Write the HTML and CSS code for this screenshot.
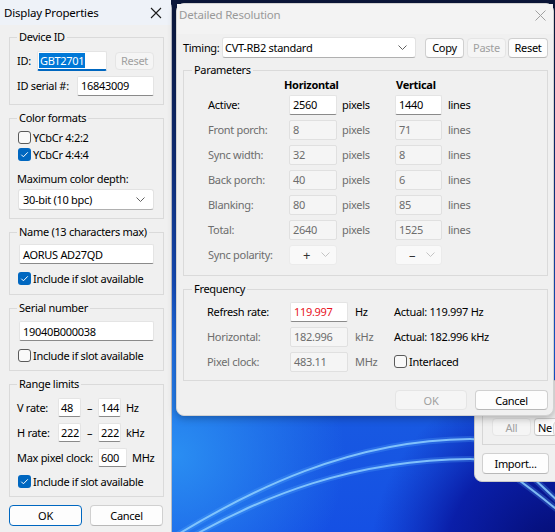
FILE: index.html
```html
<!DOCTYPE html>
<html>
<head>
<meta charset="utf-8">
<title>Display Properties</title>
<link rel="stylesheet" href="styles.css">
</head>
<body>
<svg class="wallpaper" width="555" height="532" viewBox="0 0 555 532">
  <defs>
    <linearGradient id="sky" x1="0" y1="0" x2="0" y2="1">
      <stop offset="0" stop-color="#0b173a"/>
      <stop offset="0.3" stop-color="#0f2e7c"/>
      <stop offset="0.65" stop-color="#1a5fe0"/>
      <stop offset="1" stop-color="#1550e4"/>
    </linearGradient>
    <radialGradient id="glow" cx="175" cy="455" r="170" gradientUnits="userSpaceOnUse">
      <stop offset="0" stop-color="#2a8ef2"/>
      <stop offset="1" stop-color="#2a8ef2" stop-opacity="0"/>
    </radialGradient>
    <radialGradient id="deep" cx="560" cy="560" r="190" gradientUnits="userSpaceOnUse">
      <stop offset="0" stop-color="#040a6a"/>
      <stop offset="0.6" stop-color="#07129a" stop-opacity="0.8"/>
      <stop offset="1" stop-color="#0a1fb0" stop-opacity="0"/>
    </radialGradient>
  </defs>
  <rect width="555" height="532" fill="url(#sky)"/>
  <rect width="555" height="532" fill="url(#glow)"/>
  <rect width="555" height="532" fill="url(#deep)"/>
  <g fill="none" stroke-linecap="round">
    <path d="M172 538 C250 490 350 440 470 439 C495 439 522 468 560 503" stroke="#5fb4ff" stroke-width="6" opacity="0.25"/>
    <path d="M172 538 C250 490 350 440 470 439 C495 439 522 468 560 503" stroke="#8fd0ff" stroke-width="2" opacity="0.85"/>
    <path d="M186 540 C262 496 352 460 470 459 C496 459 526 485 560 512" stroke="#5fb4ff" stroke-width="6" opacity="0.25"/>
    <path d="M186 540 C262 496 352 460 470 459 C496 459 526 485 560 512" stroke="#8fd0ff" stroke-width="2" opacity="0.85"/>
  </g>
</svg>

<!-- window partly hidden behind Detailed Resolution -->
<div class="win win-back">
  <div class="frag">
    <button class="btn off w39">All</button>
    <button class="btn w39 clip">Ne</button>
    <span class="edge"></span>
  </div>
  <button class="btn import">Import...</button>
</div>

<div class="win win-props">
  <div class="titlebar">
    <span class="title">Display Properties</span>
    <svg class="close" width="12" height="12" viewBox="0 0 12 12"><path d="M1 1 L11 11 M11 1 L1 11" stroke="#1a1a1a" stroke-width="1.1"/></svg>
  </div>

  <fieldset class="group g-device">
    <legend>Device ID</legend>
    <div class="row r25">
      <span class="lbl w20">ID:</span>
      <span class="edit focus w70"><span class="sel">GBT2701</span></span>
      <button class="btn off reset">Reset</button>
    </div>
    <div class="row r25">
      <span class="lbl w60">ID serial #:</span>
      <span class="edit grow">16843009</span>
    </div>
  </fieldset>

  <fieldset class="group g-color">
    <legend>Color formats</legend>
    <div class="row r17 chkrow"><span class="chk"></span>YCbCr 4:2:2</div>
    <div class="row r17 chkrow"><span class="chk on"><svg width="13" height="13" viewBox="0 0 13 13"><path d="M3.3 6.7 L5.4 8.8 L9.8 4.3" fill="none" stroke="#fff" stroke-width="1"/></svg></span>YCbCr 4:4:4</div>
    <div class="row r17 depth-lbl">Maximum color depth:</div>
    <div class="combo depth">
      <span>30-bit (10 bpc)</span>
      <svg width="9" height="5" viewBox="0 0 9 5"><path d="M0.5 0.5 L4.5 4.5 L8.5 0.5" fill="none" stroke="#606060"/></svg>
    </div>
  </fieldset>

  <fieldset class="group g-name">
    <legend>Name (13 characters max)</legend>
    <span class="edit full">AORUS AD27QD</span>
    <div class="row r17 chkrow mt6"><span class="chk on"><svg width="13" height="13" viewBox="0 0 13 13"><path d="M3.3 6.7 L5.4 8.8 L9.8 4.3" fill="none" stroke="#fff" stroke-width="1"/></svg></span>Include if slot available</div>
  </fieldset>

  <fieldset class="group g-serial">
    <legend>Serial number</legend>
    <span class="edit full">19040B000038</span>
    <div class="row r17 chkrow mt6"><span class="chk"></span>Include if slot available</div>
  </fieldset>

  <fieldset class="group g-range">
    <legend>Range limits</legend>
    <div class="row r25">
      <span class="lbl w41">V rate:</span>
      <span class="edit small w23">48</span>
      <span class="dash">–</span>
      <span class="edit small w23">144</span>
      <span class="unit">Hz</span>
    </div>
    <div class="row r25">
      <span class="lbl w41">H rate:</span>
      <span class="edit small w23">222</span>
      <span class="dash">–</span>
      <span class="edit small w23">222</span>
      <span class="unit">kHz</span>
    </div>
    <div class="row r25">
      <span class="lbl w81">Max pixel clock:</span>
      <span class="edit small w29">600</span>
      <span class="unit">MHz</span>
    </div>
    <div class="row r17 chkrow mt3"><span class="chk on"><svg width="13" height="13" viewBox="0 0 13 13"><path d="M3.3 6.7 L5.4 8.8 L9.8 4.3" fill="none" stroke="#fff" stroke-width="1"/></svg></span>Include if slot available</div>
  </fieldset>

  <div class="buttons-left">
    <button class="btn default w73">OK</button>
    <button class="btn w73">Cancel</button>
  </div>
</div>

<div class="win win-res">
  <div class="titlebar inactive">
    <span class="title">Detailed Resolution</span>
    <svg class="close" width="11" height="11" viewBox="0 0 11 11"><path d="M0.5 0.5 L10.5 10.5 M10.5 0.5 L0.5 10.5" stroke="#a0a0a0" stroke-width="1"/></svg>
  </div>

  <div class="timing">
    <span class="lbl w39">Timing:</span>
    <div class="combo timing-combo">
      <span>CVT-RB2 standard</span>
      <svg width="9" height="5" viewBox="0 0 9 5"><path d="M0.5 0.5 L4.5 4.5 L8.5 0.5" fill="none" stroke="#606060"/></svg>
    </div>
    <button class="btn w39 copy">Copy</button>
    <button class="btn off w39 paste">Paste</button>
    <button class="btn w40 treset">Reset</button>
  </div>

  <fieldset class="group g-params">
    <legend>Parameters</legend>
    <div class="pgrid">
      <span></span>
      <span class="head h-horz">Horizontal</span>
      <span class="head h-vert">Vertical</span>

      <span class="plbl">Active:</span>
      <span class="edit">2560</span><span class="punit">pixels</span>
      <span class="edit">1440</span><span class="punit lines">lines</span>

      <span class="plbl dim">Front porch:</span>
      <span class="edit dis">8</span><span class="punit dim">pixels</span>
      <span class="edit dis">71</span><span class="punit lines dim">lines</span>

      <span class="plbl dim">Sync width:</span>
      <span class="edit dis">32</span><span class="punit dim">pixels</span>
      <span class="edit dis">8</span><span class="punit lines dim">lines</span>

      <span class="plbl dim">Back porch:</span>
      <span class="edit dis">40</span><span class="punit dim">pixels</span>
      <span class="edit dis">6</span><span class="punit lines dim">lines</span>

      <span class="plbl dim">Blanking:</span>
      <span class="edit dis">80</span><span class="punit dim">pixels</span>
      <span class="edit dis">85</span><span class="punit lines dim">lines</span>

      <span class="plbl dim">Total:</span>
      <span class="edit dis">2640</span><span class="punit dim">pixels</span>
      <span class="edit dis">1525</span><span class="punit lines dim">lines</span>

      <span class="plbl dim">Sync polarity:</span>
      <span class="pol"><span>+</span><svg width="9" height="5" viewBox="0 0 9 5"><path d="M0.5 0.5 L4.5 4.5 L8.5 0.5" fill="none" stroke="#c4c4c4"/></svg></span><span></span>
      <span class="pol"><span>–</span><svg width="9" height="5" viewBox="0 0 9 5"><path d="M0.5 0.5 L4.5 4.5 L8.5 0.5" fill="none" stroke="#c4c4c4"/></svg></span><span></span>
    </div>
  </fieldset>

  <fieldset class="group g-freq">
    <legend>Frequency</legend>
    <div class="fgrid">
      <span class="plbl">Refresh rate:</span>
      <span class="edit red">119.997</span><span class="funit">Hz</span>
      <span class="actual">Actual: 119.997 Hz</span>

      <span class="plbl dim">Horizontal:</span>
      <span class="edit dis">182.996</span><span class="funit dim">kHz</span>
      <span class="actual">Actual: 182.996 kHz</span>

      <span class="plbl dim">Pixel clock:</span>
      <span class="edit dis">483.11</span><span class="funit dim">MHz</span>
      <span class="actual chkrow"><span class="chk"></span>Interlaced</span>
    </div>
  </fieldset>

  <div class="buttons-right">
    <button class="btn off w72">OK</button>
    <button class="btn w73">Cancel</button>
  </div>
</div>
</body>
</html>
```

FILE: styles.css
```css
* {
    box-sizing: border-box;
}
html, body {
    margin: 0;
    padding: 0;
}
body {
    position: relative;
    width: 555px;
    height: 532px;
    overflow: hidden;
    font-family: "Noto Sans", "Segoe UI", sans-serif;
    font-size: 11px;
    letter-spacing: -0.3px;
    color: #000;
    background: #12308a;
}
.wallpaper {
    position: absolute;
    left: 0;
    top: 0;
}

/* windows on the desktop */
.win {
    position: absolute;
    background: #f0f0f0;
}
.win-props {
    left: 0;
    top: 0;
    width: 171px;
    height: 540px;
    border-radius: 0 8px 0 0;
    box-shadow: 1px 0 0 #b8bcc6;
}
.win-res {
    left: 176px;
    top: 3px;
    width: 378px;
    height: 413px;
    border: 1px solid #d2d2d2;
    border-radius: 8px;
    box-shadow: 0 2px 8px rgba(0, 0, 0, 0.3);
}
.win-back {
    left: 474px;
    top: 380px;
    width: 90px;
    height: 102px;
    border-radius: 0 0 0 8px;
    border: 1px solid #c9c9c9;
}

.titlebar {
    display: flex;
    justify-content: space-between;
    height: 25px;
    padding: 5px 9px 0 4px;
    background: #eef2f8;
    font-size: 11.5px;
    letter-spacing: -0.2px;
    line-height: 16px;
}
.titlebar .close {
    margin-top: 2px;
}
.titlebar.inactive {
    height: 30px;
    padding: 3px 7px 0 2px;
    background: #f3f3f3;
    color: #999;
}
.titlebar.inactive .close {
    margin-top: 3px;
}

/* group boxes */
.group {
    border: 1px solid #dadada;
    margin: 6px 7px 0 9px;
    padding: 0 9px 6px 7px;
    min-width: 0;
}
.group legend {
    padding: 0 2px;
    height: 14px;
    line-height: 14px;
    white-space: nowrap;
}
.g-device {
    margin-top: 5px;
    padding-top: 4px;
}
.g-color {
    padding-top: 4px;
    padding-bottom: 8px;
}
.g-name {
    padding-top: 5px;
    padding-bottom: 7px;
}
.g-serial {
    padding-top: 6px;
    padding-bottom: 6px;
}
.g-range {
    padding-top: 4px;
    padding-bottom: 6px;
}

.row {
    display: flex;
    align-items: center;
}
.r25 {
    height: 25px;
}
.r17 {
    height: 17px;
}
.mt6 {
    margin-top: 6px;
}
.mt3 {
    margin-top: 3px;
}
.lbl {
    flex: none;
    white-space: nowrap;
}
.w20 { width: 20px; }
.w39 { width: 39px; }
.w40 { width: 40px; }
.w41 { width: 41px; }
.w60 { width: 60px; }
.w81 { width: 81px; }
.w72 { width: 72px; }
.w73 { width: 73px; }

/* edit boxes */
.edit {
    display: flex;
    align-items: center;
    height: 20px;
    padding: 0 3px;
    background: #fff;
    border: 1px solid #e4e4e4;
    border-bottom-color: #8a8a8a;
    border-radius: 2px;
    white-space: nowrap;
    overflow: hidden;
}
.edit.focus {
    padding-left: 1px;
    border-bottom: 2px solid #0067c0;
}
.edit .sel {
    background: #0078d7;
    color: #fff;
    line-height: 15px;
    padding: 0 1px;
}
.w70 { width: 70px; flex: none; }
.w23 { width: 23px; flex: none; }
.w29 { width: 29px; flex: none; }
.grow { flex: 1; }
.full {
    margin-left: 2px;
}
.edit.small {
    height: 19px;
    padding: 0 2px;
}
.edit.dis {
    background: #f5f5f5;
    border-color: #e0e0e0;
    color: #6d6d6d;
}
.edit.red {
    color: #e8141e;
}

.dash {
    width: 17px;
    text-align: center;
    flex: none;
}
.unit {
    margin-left: 5px;
}

/* check boxes */
.chkrow {
    display: flex;
    align-items: center;
    white-space: nowrap;
}
.chk {
    flex: none;
    width: 13px;
    height: 13px;
    margin: 0 2px 0 1px;
    border: 1px solid #5a5a5a;
    border-radius: 3px;
    background: #f9f9f9;
}
.chk.on {
    border: none;
    background: #0067c0;
}
.chk svg {
    display: block;
}
.depth-lbl {
    margin-top: 7px;
}

/* combo boxes */
.combo {
    display: flex;
    align-items: center;
    justify-content: space-between;
    padding: 0 8px 0 5px;
    background: #fff;
    border: 1px solid #e2e2e2;
    border-bottom-color: #b0b0b0;
    border-radius: 3px;
}
.depth {
    height: 21px;
    margin: 2px 0 0 1px;
    padding-left: 4px;
}

/* push buttons */
.btn {
    height: 21px;
    padding: 0;
    font-family: inherit;
    font-size: 11px;
    letter-spacing: -0.3px;
    color: #000;
    background: #fdfdfd;
    border: 1px solid #d0d0d0;
    border-bottom-color: #b8b8b8;
    border-radius: 4px;
}
.btn.off {
    background: #f5f5f5;
    border-color: #e5e5e5;
    color: #a0a0a0;
}
.btn.default {
    border: 1px solid #0067c0;
}
.reset {
    width: 39px;
    height: 18px;
    margin-left: 8px;
    flex: none;
}
.buttons-left {
    display: flex;
    gap: 8px;
    margin: 8px 0 0 9px;
}

/* Detailed Resolution */
.timing {
    display: flex;
    align-items: center;
    height: 21px;
    margin-top: 3px;
    padding-left: 6px;
}
.timing-combo {
    width: 194px;
    height: 21px;
    padding-left: 2px;
}
.copy {
    margin-left: 9px;
    height: 20px;
}
.paste {
    margin-left: 3px;
    height: 20px;
}
.treset {
    margin-left: 2px;
    height: 20px;
}
.g-params,
.g-freq {
    margin: 5px 5px 0 6px;
    padding: 0 8px 8px 8px;
}
.g-freq {
    margin-top: 6px;
    padding-top: 3px;
    padding-bottom: 6px;
}
.pgrid {
    display: grid;
    grid-template-columns: 81px 48px 58px 47px 1fr;
    grid-auto-rows: 25px;
    grid-template-rows: 15px;
    align-items: center;
    margin-left: 16px;
}
.head {
    font-weight: bold;
    grid-column: span 2;
}
.h-horz {
    margin-left: -5px;
}
.h-vert {
    margin-left: 1px;
}
.plbl {
    white-space: nowrap;
}
.dim {
    color: #6d6d6d;
}
.punit {
    padding-left: 5px;
}
.punit.lines {
    padding-left: 6px;
}
.pol {
    display: flex;
    align-items: center;
    justify-content: space-between;
    height: 20px;
    padding: 0 6px 0 13px;
    background: #f9f9f9;
    border: 1px solid #ebebeb;
    border-radius: 3px;
    color: #333;
    font-size: 13px;
}
.fgrid {
    display: grid;
    grid-template-columns: 83px 58px 46px 1fr;
    grid-auto-rows: 25px;
    align-items: center;
    margin-left: 15px;
}
.funit {
    padding-left: 7px;
}
.actual {
    white-space: nowrap;
}
.actual .chk {
    margin-left: 0;
}
.buttons-right {
    display: flex;
    justify-content: flex-end;
    gap: 8px;
    margin: 9px 5px 0 0;
}
.buttons-right .btn {
    height: 20px;
}

/* back window */
.frag {
    display: flex;
    align-items: flex-end;
    gap: 3px;
    height: 64px;
    margin-left: 7px;
    padding: 0 0 8px 9px;
    border-left: 1px solid #d6d6d6;
    border-bottom: 1px solid #d6d6d6;
}
.frag .btn {
    flex: none;
    height: 18px;
}
.clip {
    text-align: left;
    padding-left: 3px;
}
.edge {
    flex: none;
    width: 12px;
    height: 18px;
    margin: 0 0 -2px -23px;
    background: #f4f4f4;
    border: 1px solid #d4d4d4;
    border-radius: 6px 0 0 6px;
}
.import {
    width: 67px;
    margin: 8px 0 0 7px;
}
```
